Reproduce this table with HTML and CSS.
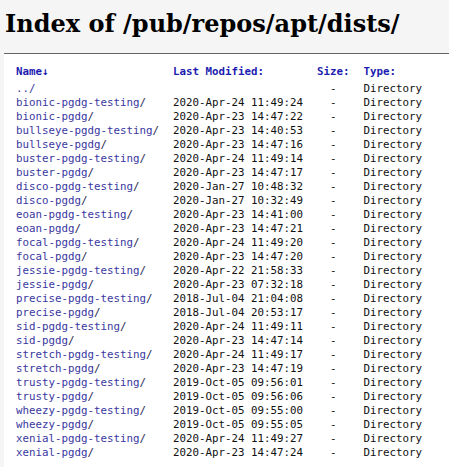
FILE: index.html
```html
<!DOCTYPE html>
<html>
<head>
<meta charset="utf-8">
<title>Index of /pub/repos/apt/dists/</title>
<link rel="stylesheet" href="styles.css">
</head>
<body>
<h1 class="title">Index of /pub/repos/apt/dists/</h1>
<div class="list">
<table class="listing">
<thead>
<tr><th class="n"><a href="#">Name↓</a></th><th class="m"><a href="#">Last Modified:</a></th><th class="s"><a href="#">Size:</a></th><th class="t"><a href="#">Type:</a></th></tr>
</thead>
<tbody>
<tr><td class="n"><a class="up" href="#">../</a></td><td class="m"></td><td class="s">-</td><td class="t">Directory</td></tr>
<tr><td class="n"><a href="#">bionic-pgdg-testing</a>/</td><td class="m">2020-Apr-24 11:49:24</td><td class="s">-</td><td class="t">Directory</td></tr>
<tr><td class="n"><a href="#">bionic-pgdg</a>/</td><td class="m">2020-Apr-23 14:47:22</td><td class="s">-</td><td class="t">Directory</td></tr>
<tr><td class="n"><a href="#">bullseye-pgdg-testing</a>/</td><td class="m">2020-Apr-23 14:40:53</td><td class="s">-</td><td class="t">Directory</td></tr>
<tr><td class="n"><a href="#">bullseye-pgdg</a>/</td><td class="m">2020-Apr-23 14:47:16</td><td class="s">-</td><td class="t">Directory</td></tr>
<tr><td class="n"><a href="#">buster-pgdg-testing</a>/</td><td class="m">2020-Apr-24 11:49:14</td><td class="s">-</td><td class="t">Directory</td></tr>
<tr><td class="n"><a href="#">buster-pgdg</a>/</td><td class="m">2020-Apr-23 14:47:17</td><td class="s">-</td><td class="t">Directory</td></tr>
<tr><td class="n"><a href="#">disco-pgdg-testing</a>/</td><td class="m">2020-Jan-27 10:48:32</td><td class="s">-</td><td class="t">Directory</td></tr>
<tr><td class="n"><a href="#">disco-pgdg</a>/</td><td class="m">2020-Jan-27 10:32:49</td><td class="s">-</td><td class="t">Directory</td></tr>
<tr><td class="n"><a href="#">eoan-pgdg-testing</a>/</td><td class="m">2020-Apr-23 14:41:00</td><td class="s">-</td><td class="t">Directory</td></tr>
<tr><td class="n"><a href="#">eoan-pgdg</a>/</td><td class="m">2020-Apr-23 14:47:21</td><td class="s">-</td><td class="t">Directory</td></tr>
<tr><td class="n"><a href="#">focal-pgdg-testing</a>/</td><td class="m">2020-Apr-24 11:49:20</td><td class="s">-</td><td class="t">Directory</td></tr>
<tr><td class="n"><a href="#">focal-pgdg</a>/</td><td class="m">2020-Apr-23 14:47:20</td><td class="s">-</td><td class="t">Directory</td></tr>
<tr><td class="n"><a href="#">jessie-pgdg-testing</a>/</td><td class="m">2020-Apr-22 21:58:33</td><td class="s">-</td><td class="t">Directory</td></tr>
<tr><td class="n"><a href="#">jessie-pgdg</a>/</td><td class="m">2020-Apr-23 07:32:18</td><td class="s">-</td><td class="t">Directory</td></tr>
<tr><td class="n"><a href="#">precise-pgdg-testing</a>/</td><td class="m">2018-Jul-04 21:04:08</td><td class="s">-</td><td class="t">Directory</td></tr>
<tr><td class="n"><a href="#">precise-pgdg</a>/</td><td class="m">2018-Jul-04 20:53:17</td><td class="s">-</td><td class="t">Directory</td></tr>
<tr><td class="n"><a href="#">sid-pgdg-testing</a>/</td><td class="m">2020-Apr-24 11:49:11</td><td class="s">-</td><td class="t">Directory</td></tr>
<tr><td class="n"><a href="#">sid-pgdg</a>/</td><td class="m">2020-Apr-23 14:47:14</td><td class="s">-</td><td class="t">Directory</td></tr>
<tr><td class="n"><a href="#">stretch-pgdg-testing</a>/</td><td class="m">2020-Apr-24 11:49:17</td><td class="s">-</td><td class="t">Directory</td></tr>
<tr><td class="n"><a href="#">stretch-pgdg</a>/</td><td class="m">2020-Apr-23 14:47:19</td><td class="s">-</td><td class="t">Directory</td></tr>
<tr><td class="n"><a href="#">trusty-pgdg-testing</a>/</td><td class="m">2019-Oct-05 09:56:01</td><td class="s">-</td><td class="t">Directory</td></tr>
<tr><td class="n"><a href="#">trusty-pgdg</a>/</td><td class="m">2019-Oct-05 09:56:06</td><td class="s">-</td><td class="t">Directory</td></tr>
<tr><td class="n"><a href="#">wheezy-pgdg-testing</a>/</td><td class="m">2019-Oct-05 09:55:00</td><td class="s">-</td><td class="t">Directory</td></tr>
<tr><td class="n"><a href="#">wheezy-pgdg</a>/</td><td class="m">2019-Oct-05 09:55:05</td><td class="s">-</td><td class="t">Directory</td></tr>
<tr><td class="n"><a href="#">xenial-pgdg-testing</a>/</td><td class="m">2020-Apr-24 11:49:27</td><td class="s">-</td><td class="t">Directory</td></tr>
<tr><td class="n"><a href="#">xenial-pgdg</a>/</td><td class="m">2020-Apr-23 14:47:24</td><td class="s">-</td><td class="t">Directory</td></tr>
</tbody>
</table>
</div>
</body>
</html>
```
FILE: styles.css
```css
html, body {
  margin: 0;
  padding: 0;
}
body {
  background-color: #f5f5f5;
  padding-left: 4px;
  color: #000;
}
.title {
  font-family: "DejaVu Serif", serif;
  font-weight: bold;
  font-size: 24px;
  line-height: 28px;
  margin: 10px 0 15px 1px;
}
.list {
  background-color: #fff;
  border-top: 1px solid #646464;
  padding-top: 11px;
  padding-bottom: 14px;
}
.listing {
  margin-left: 12px;
  border-collapse: separate;
  border-spacing: 0;
}
.listing th, .listing td {
  font-family: "DejaVu Sans Mono", monospace;
  font-size: 10.8px;
  line-height: 14px;
  padding: 0 14px 0 0;
  text-align: left;
  white-space: nowrap;
  color: #111;
}
.listing th {
  font-weight: bold;
  padding-bottom: 3px;
}
.listing th a {
  color: #1c1cb0;
  text-decoration: none;
}
.listing td a {
  color: #3a38a0;
  text-decoration: none;
}
.listing .s {
  text-align: center;
}
.listing td.n {
  color: #2a2a50;
}
```
